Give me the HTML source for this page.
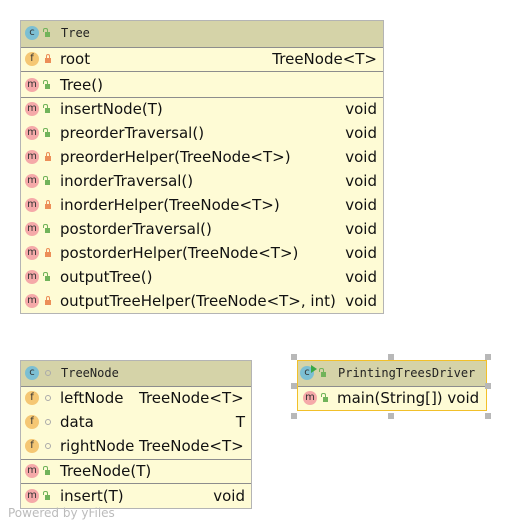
<!DOCTYPE html>
<html><head><meta charset="utf-8"><style>
body{margin:0;width:507px;height:529px;background:#fff;position:relative;overflow:hidden;font-family:"DejaVu Sans","Liberation Sans",sans-serif;}
.box{position:absolute;background:#fefbd5;border:1px solid #b4b4b4;box-sizing:border-box;}
.hd{position:absolute;left:0;right:0;top:0;background:#d5d3a8;border-bottom:1px solid #8d8d8d;}
.sep{position:absolute;left:0;right:0;height:1px;background:#8d8d8d;}
.t{position:absolute;font-size:15px;color:#111;line-height:18px;white-space:nowrap;}
.hn{position:absolute;font-family:"DejaVu Sans Mono",monospace;font-size:12px;color:#222;line-height:14px;}
.ic{position:absolute;width:14px;height:14px;border-radius:50%;font-size:10px;line-height:14px;text-align:center;color:#333;font-family:"DejaVu Sans",sans-serif;}
.c{background:#7cbfd3}.f{background:#f5c774}.m{background:#f5a9a9}
.lk{position:absolute;width:5px;height:5px;}
.g{background:#71b35a}.r{background:#ec8e58}
.dot{position:absolute;width:4px;height:4px;border:1px solid #aaa;border-radius:50%;}
.h{position:absolute;width:6px;height:6px;background:#b8b8b8;}
</style></head><body>

<div class="box" style="left:20px;top:20px;width:364px;height:294px;">
 <div class="hd" style="height:26px;"></div>
</div>
<div class="box" style="left:20px;top:360px;width:232px;height:149px;">
 <div class="hd" style="height:25px;"></div>
</div>
<div class="box" style="left:297px;top:360px;width:190px;height:51px;border:1px solid #f2c02a;">
 <div class="hd" style="height:25px;"></div>
</div>

<div id="c"></div>
<div class="t" style="left:8px;top:504px;font-size:12px;color:#bbb;">Powered by yFiles</div>

<script>
var H='';
function ic(cls,ch,x,y){H+='<div class="ic '+cls+'" style="left:'+(x-7)+'px;top:'+(y-7)+'px">'+ch+'</div>';}
function lock(type,x,y){
 if(type=='g'){H+='<div class="lk g" style="left:'+(x-2)+'px;top:'+(y-1)+'px"></div><div style="position:absolute;left:'+(x-4)+'px;top:'+(y-5)+'px;width:3px;height:3px;border:1px solid #71b35a;border-bottom:none;border-radius:2px 2px 0 0"></div>';}
 else if(type=='r'){H+='<div class="lk r" style="left:'+(x-3)+'px;top:'+(y-1)+'px;width:6px"></div><div style="position:absolute;left:'+(x-2)+'px;top:'+(y-5)+'px;width:2px;height:3px;border:1px solid #ec8e58;border-bottom:none;border-radius:2px 2px 0 0"></div>';}
 else H+='<div class="dot" style="left:'+(x-3)+'px;top:'+(y-3)+'px"></div>';
}
function t(s,x,y,right){H+='<div class="t" style="'+(right?'right:'+(507-right)+'px':'left:'+x+'px')+';top:'+(y-9)+'px">'+s+'</div>';}
function sep(l,w,y){H+='<div class="sep" style="left:'+l+'px;width:'+w+'px;top:'+y+'px"></div>';}
ic('c','c',32,33);lock('g',47,33);H+='<div class="hn" style="left:61px;top:26px">Tree</div>';
ic('f','f',32,59);lock('r',48,59);t('root',60,59);t('TreeNode&lt;T&gt;',0,59,377);
sep(21,362,71);
ic('m','m',32,85);lock('g',47,85);t('Tree()',60,85);
sep(21,362,97);
var ms=[['insertNode(T)','g'],['preorderTraversal()','g'],['preorderHelper(TreeNode&lt;T&gt;)','r'],['inorderTraversal()','g'],['inorderHelper(TreeNode&lt;T&gt;)','r'],['postorderTraversal()','g'],['postorderHelper(TreeNode&lt;T&gt;)','r'],['outputTree()','g'],['outputTreeHelper(TreeNode&lt;T&gt;, int)','r']];
ms.forEach(function(m,i){var y=109+24*i;ic('m','m',32,y);lock(m[1],m[1]=='r'?48:47,y);t(m[0],60,y);t('void',0,y,377);});
ic('c','c',32,373);lock('d',48,373);H+='<div class="hn" style="left:61px;top:366px">TreeNode</div>';
ic('f','f',32,398);lock('d',48,398);t('leftNode',60,398);t('TreeNode&lt;T&gt;',139,398);
ic('f','f',32,422);lock('d',48,422);t('data',60,422);t('T',0,422,245);
ic('f','f',32,446);lock('d',48,446);t('rightNode',60,446);t('TreeNode&lt;T&gt;',139,446);
sep(21,230,459);
ic('m','m',32,471);lock('g',47,471);t('TreeNode(T)',60,471);
sep(21,230,483);
ic('m','m',32,496);lock('g',47,496);t('insert(T)',60,496);t('void',0,496,245);
ic('c','c',307,373);H+='<div style="position:absolute;left:311px;top:365px;width:0;height:0;border-left:6px solid #3aa845;border-top:4px solid transparent;border-bottom:4px solid transparent"></div>';
lock('g',323,373);H+='<div class="hn" style="left:338px;top:366px">PrintingTreesDriver</div>';
ic('m','m',310,398);lock('g',325,398);t('main(String[]) void',337,398);
var hs=[[291,354],[388,354],[485,354],[291,383],[485,383],[291,413],[388,413],[485,413]];
hs.forEach(function(p){H+='<div class="h" style="left:'+p[0]+'px;top:'+p[1]+'px"></div>';});
document.getElementById('c').innerHTML=H;
</script>
</body></html>
